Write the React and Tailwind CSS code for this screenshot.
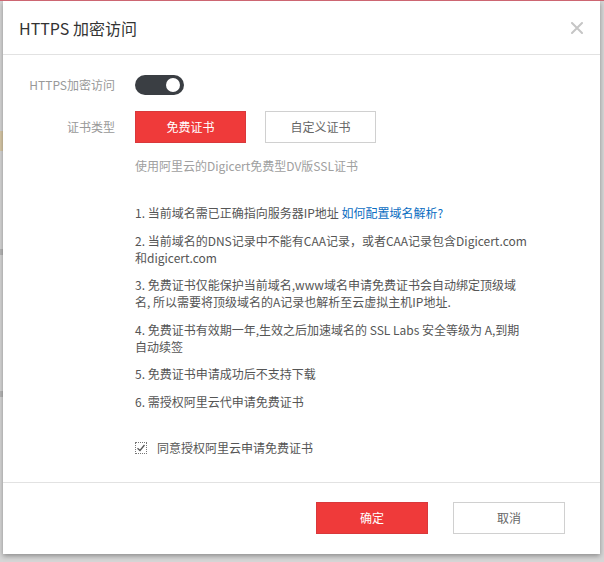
import React from 'react';

const font = { fontFamily: '"Noto Sans CJK SC", "Noto Sans", sans-serif' };

const items = [
    [
        <>
            1. 当前域名需已正确指向服务器IP地址{' '}
            <span className="text-[#0a6dc2]">如何配置域名解析?</span>
        </>,
    ],
    ['2. 当前域名的DNS记录中不能有CAA记录，或者CAA记录包含Digicert.com', '和digicert.com'],
    ['3. 免费证书仅能保护当前域名,www域名申请免费证书会自动绑定顶级域', '名, 所以需要将顶级域名的A记录也解析至云虚拟主机IP地址.'],
    ['4. 免费证书有效期一年,生效之后加速域名的 SSL Labs 安全等级为 A,到期', '自动续签'],
    ['5. 免费证书申请成功后不支持下载'],
    ['6. 需授权阿里云代申请免费证书'],
];

const App = () => {
    return (
        <div
            className="w-[604px] h-[562px] bg-[#d6d6d6] border-t border-[#cd6672] overflow-hidden relative"
            style={font}
        >
            {/* faint page lines behind the overlay */}
            <div className="absolute left-0 top-[130px] w-[3px] h-[20px] bg-[#d9c9a8]" />
            <div className="absolute left-0 top-[248px] w-[3px] h-[6px] bg-[#b8b8b8]" />
            <div className="absolute left-0 top-[390px] w-[3px] h-[6px] bg-[#b8b8b8]" />

            {/* Modal */}
            <div className="relative ml-[3px] w-[597px] h-[553px] bg-white flex flex-col shadow-[0_2px_5px_rgba(0,0,0,0.35)]">
                {/* Header */}
                <div className="h-[54px] border-b border-[#e2e2e2] flex items-center justify-between pl-[16px] pr-[17px]">
                    <h1 className="text-[16px] text-[#333] leading-none">HTTPS 加密访问</h1>
                    <svg width="12" height="12" viewBox="0 0 12 12" className="mt-[1px]">
                        <path d="M1 1L11 11M11 1L1 11" stroke="#c6c6c6" strokeWidth="2" strokeLinecap="round" />
                    </svg>
                </div>

                {/* Body */}
                <div className="flex-1 pt-[14px] text-[12px]">
                    <div className="flex items-center h-[32px]">
                        <div className="w-[112px] text-right text-[#999]">HTTPS加密访问</div>
                        <div className="ml-[20px] w-[49px] h-[20px] rounded-full bg-[#3a3e43] flex items-center justify-end pr-[4px]">
                            <div className="w-[14px] h-[14px] rounded-full bg-white" />
                        </div>
                    </div>

                    <div className="flex items-center h-[32px] mt-[10px]">
                        <div className="w-[112px] text-right text-[#999]">证书类型</div>
                        <button className="ml-[20px] w-[111px] h-[32px] bg-[#ef3a3a] border border-[#d9383b] text-white">
                            免费证书
                        </button>
                        <button className="ml-[19px] w-[111px] h-[32px] bg-white border border-[#d0d0d0] text-[#666]">
                            自定义证书
                        </button>
                    </div>

                    <p className="ml-[132px] mt-[14px] leading-[17px] text-[#a0a0a0]">
                        使用阿里云的Digicert免费型DV版SSL证书
                    </p>

                    <ul className="ml-[132px] mt-[30px] flex flex-col gap-[10.5px] text-[#555] leading-[17px]">
                        {items.map((lines, i) => (
                            <li key={i} className="whitespace-nowrap">
                                {lines.map((line, j) => (
                                    <div key={j}>{line}</div>
                                ))}
                            </li>
                        ))}
                    </ul>

                    <label className="ml-[132px] mt-[30px] flex items-center h-[17px] text-[#555]">
                        <span className="w-[12px] h-[12px] border border-dotted border-[#777] flex items-center justify-center">
                            <svg width="10" height="10" viewBox="0 0 10 10">
                                <path d="M1.5 5.2L4 7.5L8.5 2" stroke="#555" strokeWidth="1.3" fill="none" />
                            </svg>
                        </span>
                        <span className="ml-[10px]">同意授权阿里云申请免费证书</span>
                    </label>
                </div>

                {/* Footer */}
                <div className="border-t border-[#e2e2e2] pt-[19px] pb-[20px] pr-[35px] flex justify-end gap-[25px] text-[12px]">
                    <button className="w-[112px] h-[32px] bg-[#ef3a3a] border border-[#d9383b] text-white">
                        确定
                    </button>
                    <button className="w-[112px] h-[32px] bg-white border border-[#d0d0d0] text-[#666]">
                        取消
                    </button>
                </div>
            </div>
        </div>
    );
};

export default App;
